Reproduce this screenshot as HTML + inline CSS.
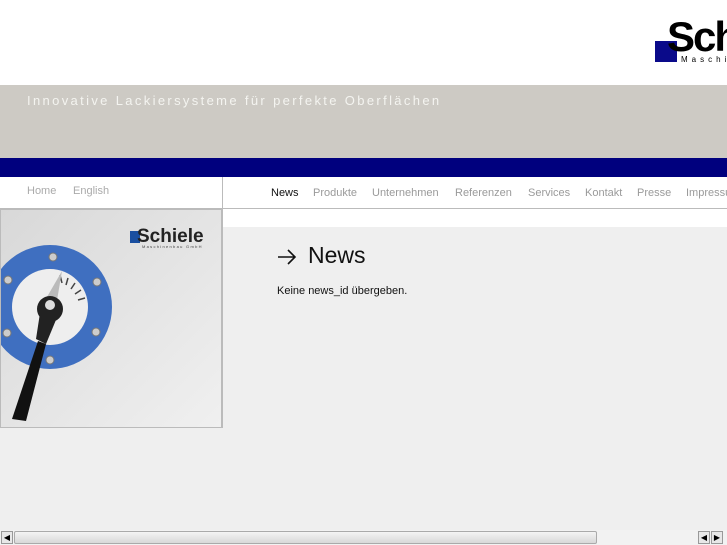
<!DOCTYPE html>
<html><head><meta charset="utf-8"><style>
*{margin:0;padding:0;box-sizing:border-box}
body{width:727px;height:545px;overflow:hidden;background:#efefef;font-family:"Liberation Sans",sans-serif;position:relative}
.a{position:absolute}
.n{position:absolute;top:187px;font-size:11px;color:#9a9a9a;white-space:nowrap}
</style></head><body>
<div class="a" style="left:0;top:0;width:727px;height:85px;background:#fff"></div>
<div class="a" style="left:655px;top:41px;width:22px;height:21px;background:#0a0a8a"></div>
<div class="a" style="left:667px;top:12px;font-size:42px;font-weight:bold;letter-spacing:-2px;color:#000;line-height:50px">Sch</div>
<div class="a" style="left:681px;top:55px;font-size:8px;letter-spacing:4px;color:#000">Maschi</div>
<div class="a" style="left:0;top:85px;width:727px;height:73px;background:#cdcac4"></div>
<div class="a" style="left:27px;top:93px;font-size:13px;letter-spacing:2.35px;color:#f4f4f0;white-space:nowrap">Innovative Lackiersysteme für perfekte Oberflächen</div>
<div class="a" style="left:0;top:158px;width:727px;height:19px;background:#00007e"></div>
<div class="a" style="left:0;top:177px;width:727px;height:32px;background:#fff;border-bottom:1px solid #bbb"></div>
<div class="a" style="left:222px;top:177px;width:1px;height:251px;background:#bbb"></div>
<div class="n" style="left:27px;top:185px;color:#aaa">Home</div>
<div class="n" style="left:73px;top:185px;color:#aaa">English</div>
<div class="n" style="left:271px;color:#111">News</div>
<div class="n" style="left:313px">Produkte</div>
<div class="n" style="left:372px">Unternehmen</div>
<div class="n" style="left:455px">Referenzen</div>
<div class="n" style="left:528px">Services</div>
<div class="n" style="left:585px">Kontakt</div>
<div class="n" style="left:637px">Presse</div>
<div class="n" style="left:686px">Impressum</div>
<div class="a" style="left:223px;top:209px;width:504px;height:18px;background:#fff"></div>
<svg class="a" style="left:0;top:209px" width="222" height="219" viewBox="0 0 222 219">
<defs><linearGradient id="g" x1="0" y1="0" x2="1" y2="1"><stop offset="0" stop-color="#d8d8d8"/><stop offset="1" stop-color="#f0f0f0"/></linearGradient></defs>
<rect width="222" height="219" fill="url(#g)"/>
<rect x="130" y="22" width="10" height="12" fill="#1a4fa0"/>
<text x="137" y="33" font-family="Liberation Sans" font-weight="bold" font-size="19" fill="#222">Schiele</text>
<text x="142" y="39" font-family="Liberation Sans" font-size="4" letter-spacing="1.3" fill="#444">Maschinenbau GmbH</text>
<circle cx="50" cy="98" r="62" fill="#3f6fc0"/>
<circle cx="50" cy="98" r="38" fill="#eee"/>
<g stroke="#444" stroke-width="1.5"><line x1="60" y1="66" x2="62" y2="74"/><line x1="68" y1="69" x2="66" y2="76"/><line x1="75" y1="74" x2="71" y2="80"/><line x1="81" y1="81" x2="75" y2="85"/><line x1="85" y1="89" x2="78" y2="91"/></g>
<g fill="#ccc" stroke="#777"><circle cx="53" cy="48" r="4"/><circle cx="97" cy="73" r="4"/><circle cx="96" cy="123" r="4"/><circle cx="50" cy="151" r="4"/><circle cx="7" cy="124" r="4"/><circle cx="8" cy="71" r="4"/></g>
<polygon points="62,62 40,100 55,103" fill="#bbb"/>
<circle cx="50" cy="100" r="13" fill="#222"/>
<circle cx="50" cy="96" r="5" fill="#ddd"/>
<polygon points="40,104 58,106 46,135 36,130" fill="#222"/>
<polygon points="38,132 46,135 26,212 12,210" fill="#111"/>
<rect x="0.5" y="0.5" width="221" height="218" fill="none" stroke="#bbb"/>
</svg>
<svg class="a" style="left:276px;top:248px" width="22" height="18"><path d="M2 9H19M12 2L19 9L12 16" fill="none" stroke="#111" stroke-width="1.6"/></svg>
<div class="a" style="left:308px;top:242px;font-size:23px;color:#111">News</div>
<div class="a" style="left:277px;top:285px;font-size:11px;color:#111">Keine news_id übergeben.</div>
<div class="a" style="left:0;top:530px;width:727px;height:15px;background:#f2f2f2"></div>
<div class="a" style="left:1px;top:531px;width:12px;height:13px;border:1px solid #999;background:#e8e8e8;font-size:8px;line-height:11px;text-align:center">◀</div>
<div class="a" style="left:14px;top:531px;width:583px;height:13px;border:1px solid #aaa;border-radius:2px;background:linear-gradient(#f4f4f4,#d8d8d8)"></div>
<div class="a" style="left:698px;top:531px;width:12px;height:13px;border:1px solid #999;background:#e8e8e8;font-size:8px;line-height:11px;text-align:center">◀</div>
<div class="a" style="left:711px;top:531px;width:12px;height:13px;border:1px solid #999;background:#e8e8e8;font-size:8px;line-height:11px;text-align:center">▶</div>
</body></html>
